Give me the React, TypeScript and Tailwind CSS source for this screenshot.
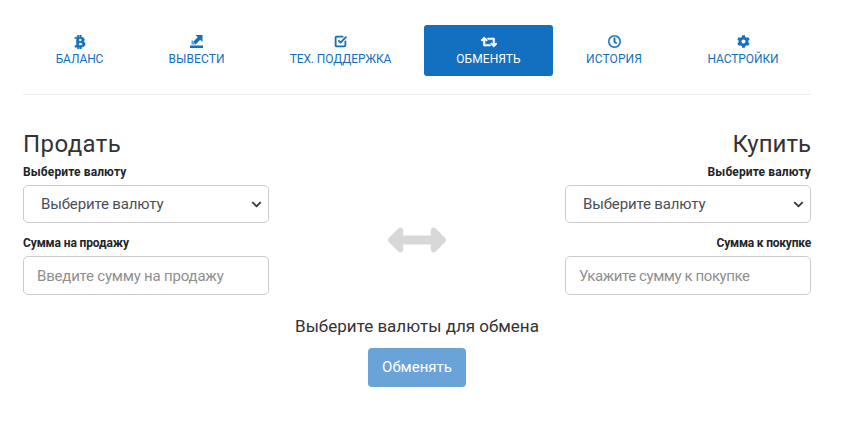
import { FaBtc, FaRetweet, FaCog, FaRegClock, FaChevronDown, FaArrowsAltH } from "react-icons/fa";
import { FiCheckSquare } from "react-icons/fi";
import type { ReactNode } from "react";

function WithdrawIcon() {
  return (
    <svg viewBox="0 0 13 13" className="size-[13px]" fill="currentColor">
      <rect x="0" y="10.5" width="13" height="2.5" />
      <path d="M5.5 0H12.5V7L10.2 4.8 5.6 9.4 3 6.9 7.7 2.3Z" />
      <path d="M1.5 5.5H3V7.5L5.5 9.6H1.5Z" opacity="0.7" />
    </svg>
  );
}

const tabs: { label: string; icon: ReactNode; width: string; tracking: string; active?: boolean }[] = [
  { label: "БАЛАНС", icon: <FaBtc className="size-[14px] stroke-[20]" />, width: "w-[113px]", tracking: "tracking-[-0.1px]" },
  { label: "ВЫВЕСТИ", icon: <WithdrawIcon />, width: "w-[121px]", tracking: "tracking-[0.1px]" },
  { label: "ТЕХ. ПОДДЕРЖКА", icon: <FiCheckSquare className="size-[13px] stroke-[3.4]" />, width: "w-[167px]", tracking: "tracking-[-0.1px]" },
  { label: "ОБМЕНЯТЬ", icon: <FaRetweet className="size-[16px] stroke-[24]" />, width: "w-[129px]", tracking: "tracking-[0.05px]", active: true },
  { label: "ИСТОРИЯ", icon: <FaRegClock className="size-[13px] stroke-[16]" />, width: "w-[122px]", tracking: "tracking-[0.1px]" },
  { label: "НАСТРОЙКИ", icon: <FaCog className="size-[13px]" />, width: "w-[136px]", tracking: "tracking-[-0.1px]" },
];

function Field({ label, tracking, children }: { label: string; tracking: string; children: ReactNode }) {
  return (
    <div>
      <div className={`mb-[4px] text-xs leading-[18px] font-bold text-[#212529] ${tracking}`}>{label}</div>
      {children}
    </div>
  );
}

function CurrencySelect() {
  return (
    <div className="flex h-[38px] items-center justify-between rounded-[5px] border border-[#ccc] pr-[6px] pl-[17px] text-left text-[15px] tracking-[-0.15px] text-[#495057]">
      <span>Выберите валюту</span>
      <FaChevronDown className="size-[11px] text-[#343a40]" />
    </div>
  );
}

function AmountInput({ placeholder, tracking }: { placeholder: string; tracking: string }) {
  return (
    <input
      readOnly
      placeholder={placeholder}
      className={`h-[39px] w-full rounded-[5px] border border-[#ccc] px-[13px] text-[15px] text-[#495057] outline-none placeholder:text-[#8f8f8f] ${tracking}`}
    />
  );
}

export default function App() {
  return (
    <div className="h-[422px] w-[868px] overflow-hidden bg-white px-[23px] pt-[25px] font-['Roboto',sans-serif] text-[#212529]">
      <div className="w-[788px]">
        <nav className="flex h-[70px] items-start border-b border-[#eee]">
          {tabs.map((tab) => (
            <div
              key={tab.label}
              className={`flex h-[51px] flex-col items-center rounded-[3px] text-xs ${tab.tracking} ${tab.width} ${
                tab.active ? "bg-[#136fbf] text-white" : "text-[#136fbf]"
              }`}
            >
              <div className="mt-[9px] flex h-[15px] items-center">{tab.icon}</div>
              <span className="mt-[1px] leading-[18px]">{tab.label}</span>
            </div>
          ))}
        </nav>

        <div className="mt-[30px] flex justify-between">
          <div className="w-[246px]">
            <h2 className="text-2xl leading-[38px] tracking-[0.4px] text-[#333]">Продать</h2>
            <Field label="Выберите валюту" tracking="tracking-[0.12px]">
              <CurrencySelect />
            </Field>
            <div className="mt-[11px]">
              <Field label="Сумма на продажу" tracking="tracking-[-0.13px]">
                <AmountInput placeholder="Введите сумму на продажу" tracking="tracking-[-0.2px]" />
              </Field>
            </div>
          </div>

          <div className="flex items-center pt-[60px]">
            <FaArrowsAltH className="size-[58px] text-[#d8d8d8]" />
          </div>

          <div className="w-[246px] text-right">
            <h2 className="text-2xl leading-[38px] text-[#333]">Купить</h2>
            <Field label="Выберите валюту" tracking="tracking-[0.12px]">
              <CurrencySelect />
            </Field>
            <div className="mt-[11px]">
              <Field label="Сумма к покупке" tracking="tracking-[-0.21px]">
                <AmountInput placeholder="Укажите сумму к покупке" tracking="tracking-[-0.42px]" />
              </Field>
            </div>
          </div>
        </div>

        <div className="mt-[18px] flex flex-col items-center">
          <div className="text-[17px] leading-[27px] text-[#333]">Выберите валюты для обмена</div>
          <button className="mt-[8px] h-[39px] rounded-[4px] bg-[#6aa3d8] px-[14px] text-[15px] text-white">Обменять</button>
        </div>
      </div>
    </div>
  );
}
